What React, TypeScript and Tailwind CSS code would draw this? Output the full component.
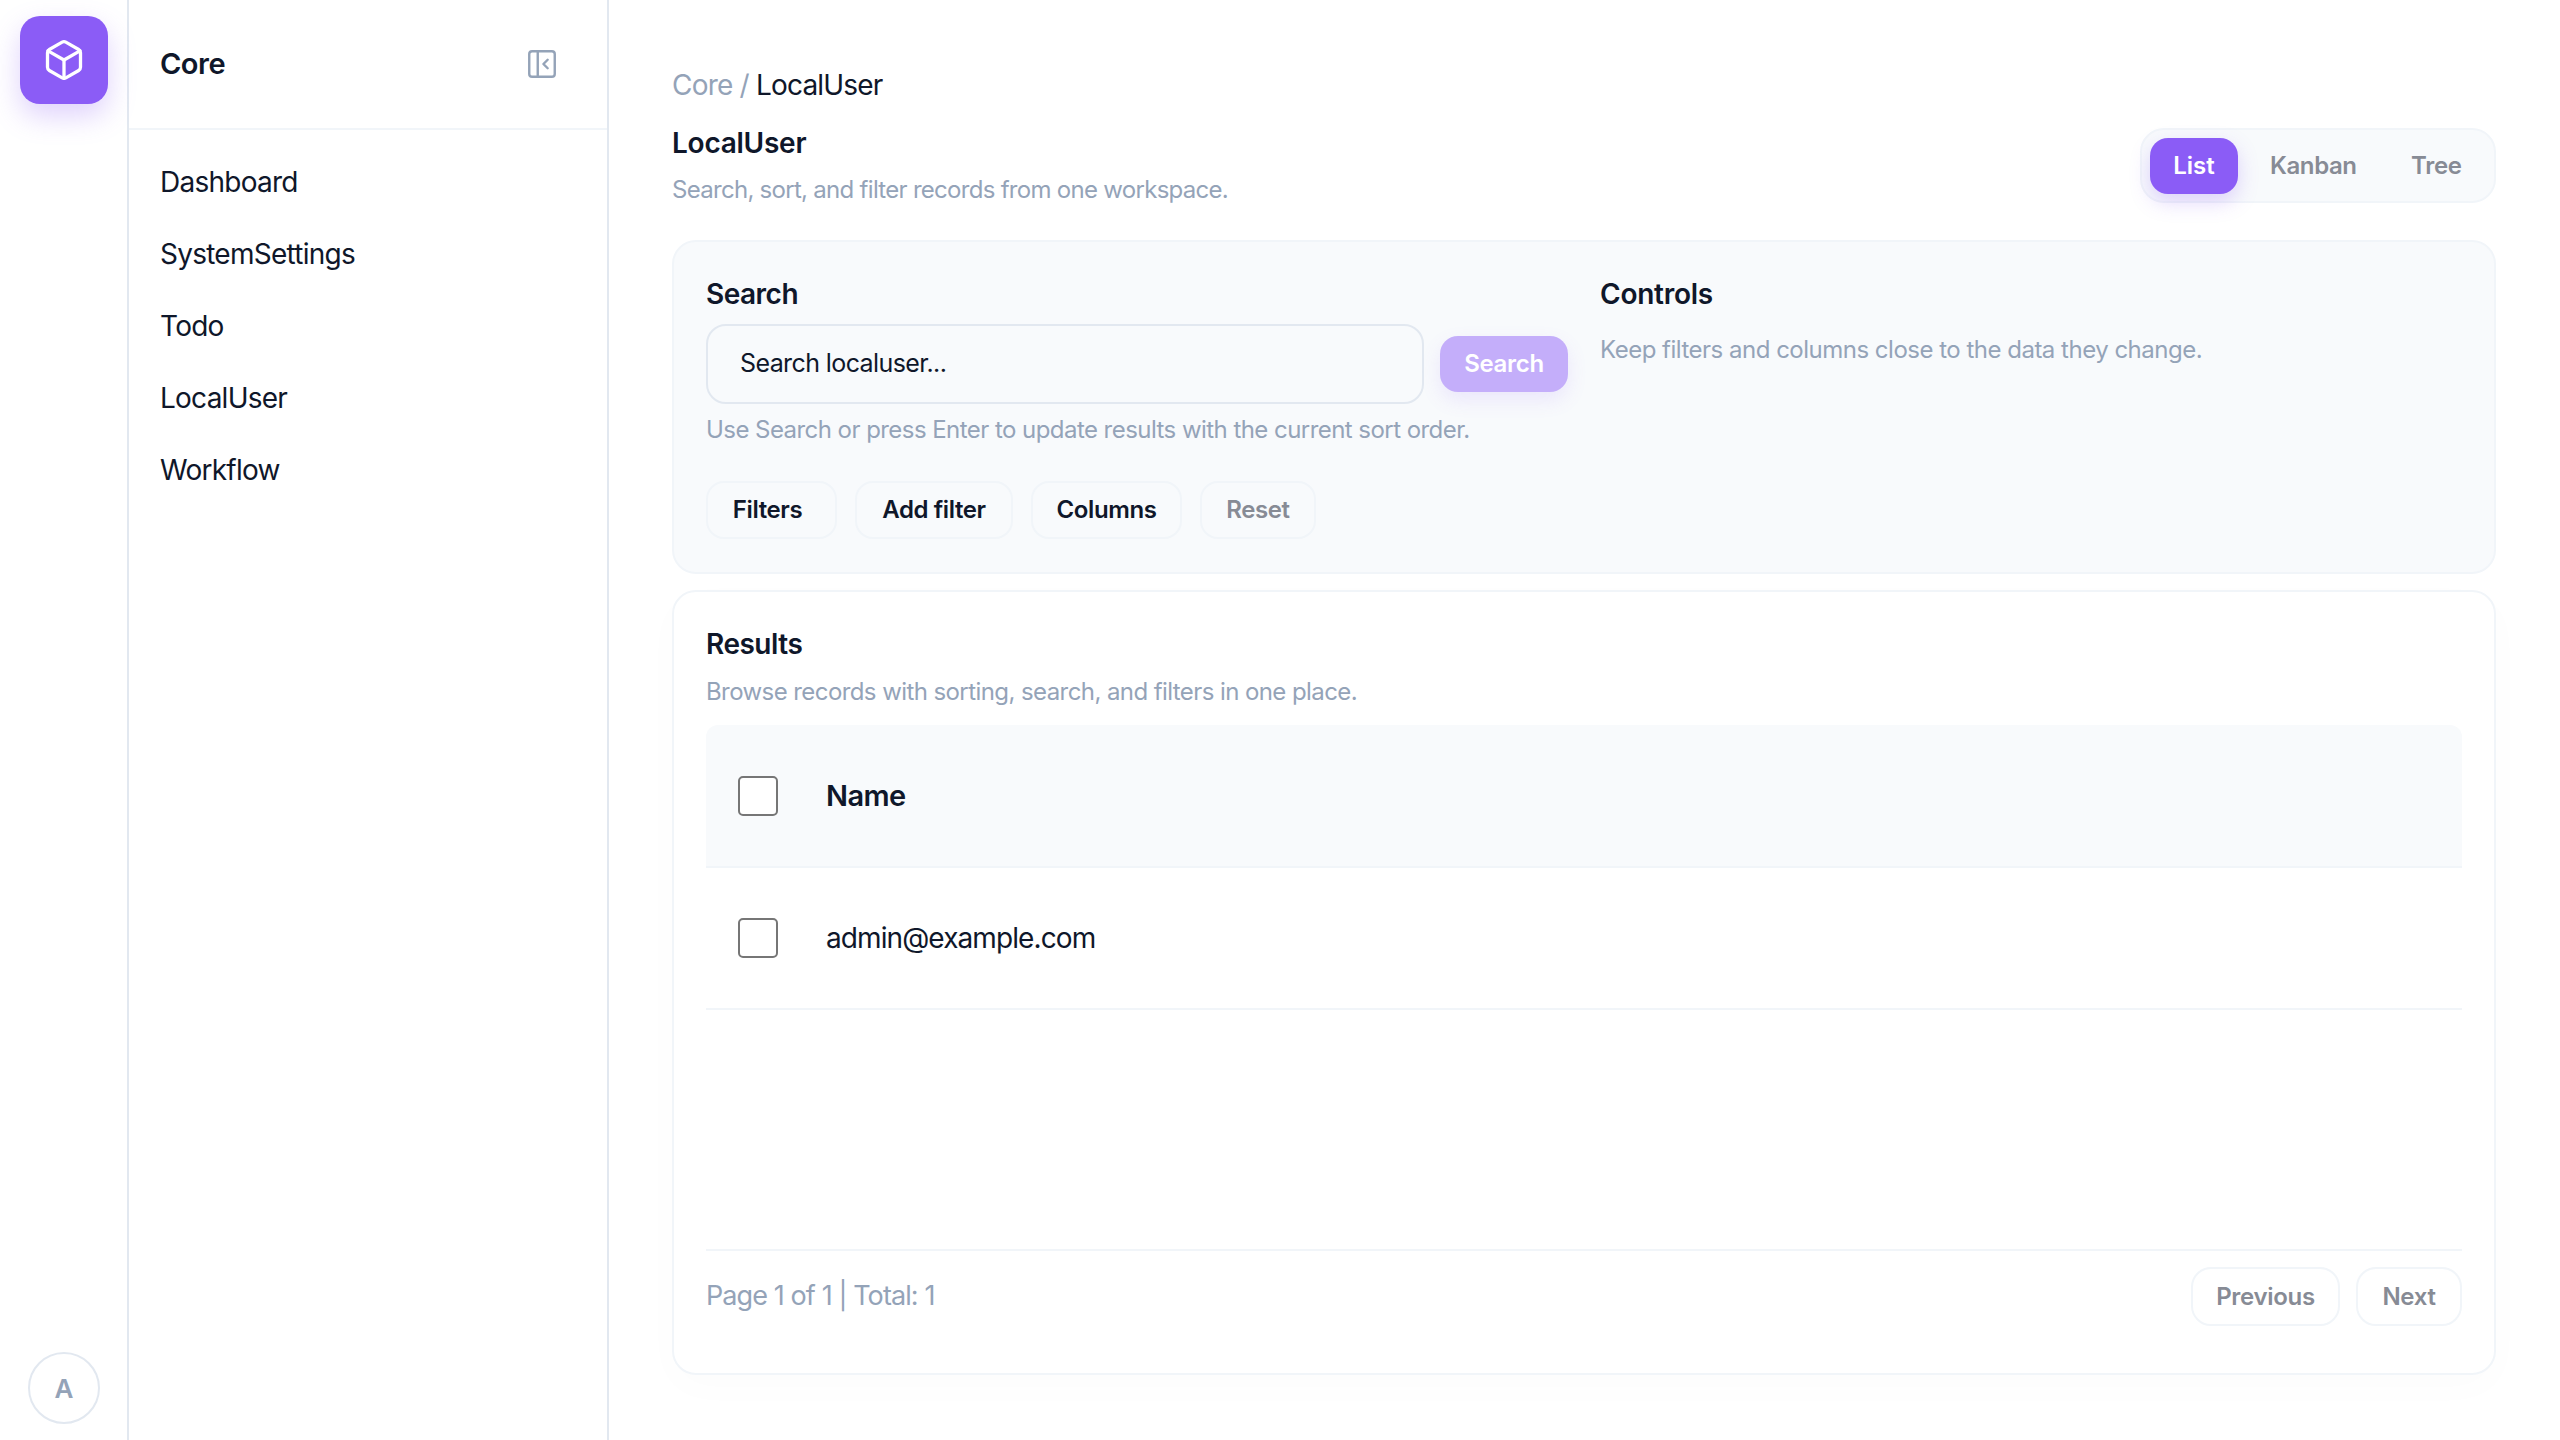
import { Box, PanelLeftClose } from "lucide-react";

const navItems = ["Dashboard", "SystemSettings", "Todo", "LocalUser", "Workflow"];

const filterButtons = [
  { label: "Filters", w: "w-[131px] pr-[8px]", muted: false },
  { label: "Add filter", w: "w-[158px]", muted: false },
  { label: "Columns", w: "w-[151px]", muted: false },
  { label: "Reset", w: "w-[116px]", muted: true },
];

function Check() {
  return <div className="w-[40px] h-[40px] shrink-0 rounded-[5px] border-[2px] border-[#767676] bg-white" />;
}

export default function App() {
  return (
    <div className="flex h-[1440px] w-[2560px] overflow-hidden bg-white text-[#0f172a] font-['Inter',sans-serif]">
      {/* Rail */}
      <aside className="flex w-[129px] shrink-0 flex-col items-center justify-between border-r-[2px] border-[#e2e8f0] pt-[16px] pb-[16px] pl-[1px]">
        <div className="flex h-[88px] w-[88px] items-center justify-center rounded-[20px] bg-[#8b5cf6] shadow-[0_12px_28px_rgba(139,92,246,0.28)]">
          <Box className="h-[44px] w-[44px] text-white" strokeWidth={1.8} />
        </div>
        <div className="flex h-[72px] w-[72px] items-center justify-center rounded-full border-[2px] border-[#e2e8f0] text-[26px] font-semibold text-[#94a3b8]">
          A
        </div>
      </aside>

      {/* Sidebar */}
      <aside className="w-[480px] shrink-0 border-r-[2px] border-[#e2e8f0]">
        <div className="flex h-[130px] items-center justify-between border-b-[2px] border-[#f1f5f9] pl-[31px] pr-[48px]">
          <span className="text-[29px] font-semibold tracking-[-0.5px]">Core</span>
          <PanelLeftClose className="h-[34px] w-[34px] text-[#94a3b8]" strokeWidth={1.7} />
        </div>
        <nav className="flex flex-col pt-[16px] pl-[31px]">
          {navItems.map((item) => (
            <a key={item} className="flex h-[72px] items-center text-[28px] tracking-[-0.75px]">
              {item}
            </a>
          ))}
        </nav>
      </aside>

      {/* Main */}
      <main className="flex min-w-0 flex-1 flex-col pl-[63px] pr-[64px] pt-[64px]">
        <div className="text-[28px] leading-[42px] tracking-[-0.8px] text-[#94a3b8]">
          Core / <span className="text-[#0f172a]">LocalUser</span>
        </div>

        <div className="mt-[22px] flex h-[75px] items-center justify-between">
          <div>
            <h1 className="text-[28px] font-semibold leading-[40px] tracking-[-0.25px]">LocalUser</h1>
            <p className="mt-[9px] text-[24px] leading-[36px] tracking-[-0.71px] text-[#94a3b8]">
              Search, sort, and filter records from one workspace.
            </p>
          </div>
          <div className="flex h-[75px] w-[356px] items-center rounded-[24px] border-[2px] border-[#f1f5f9] bg-[#f8fafc] pl-[8px] text-[24px] font-semibold">
            <div className="flex h-[56px] w-[88px] items-center justify-center rounded-[18px] bg-[#8b5cf6] text-white shadow-[0_8px_20px_rgba(139,92,246,0.25)]">
              List
            </div>
            <span className="ml-[32px] w-[84px] tracking-[-0.4px] text-[#878b95]">Kanban</span>
            <span className="ml-[57px] tracking-[-0.3px] text-[#878b95]">Tree</span>
          </div>
        </div>

        {/* Search card */}
        <section className="mt-[37px] flex h-[334px] gap-[32px] rounded-[24px] border-[2px] border-[#f1f5f9] bg-[#f8fafc] px-[32px] pt-[32px]">
          <div className="w-[862px] shrink-0">
            <h2 className="text-[28px] font-semibold leading-[40px] tracking-[-0.5px]">Search</h2>
            <div className="mt-[10px] flex items-center gap-[16px]">
              <div className="flex h-[80px] w-[718px] items-center rounded-[20px] border-[2px] border-[#e2e8f0] pl-[32px] text-[25px] tracking-[-0.6px]">
                Search localuser...
              </div>
              <button className="h-[56px] w-[128px] rounded-[18px] bg-[#c4aefa] text-[24px] font-semibold tracking-[-0.3px] text-white shadow-[0_8px_20px_rgba(139,92,246,0.12)]">
                Search
              </button>
            </div>
            <p className="mt-[8px] text-[24px] leading-[36px] tracking-[-0.55px] text-[#94a3b8]">
              Use Search or press Enter to update results with the current sort order.
            </p>
            <div className="mt-[33px] flex gap-[18px]">
              {filterButtons.map((b) => (
                <button
                  key={b.label}
                  className={`h-[58px] ${b.w} rounded-[18px] border-[2px] border-[#f1f5f9] text-[24px] font-semibold tracking-[-0.4px] ${
                    b.muted ? "text-[#878b95]" : "text-[#0f172a]"
                  }`}
                >
                  {b.label}
                </button>
              ))}
            </div>
          </div>
          <div>
            <h2 className="text-[28px] font-semibold leading-[40px] tracking-[-0.25px]">Controls</h2>
            <p className="mt-[18px] text-[24px] leading-[36px] tracking-[-0.5px] text-[#94a3b8]">
              Keep filters and columns close to the data they change.
            </p>
          </div>
        </section>

        {/* Results card */}
        <section className="mt-[16px] flex h-[785px] flex-col rounded-[24px] border-[2px] border-[#f1f5f9] bg-white px-[32px] pt-[32px] shadow-[0_12px_40px_rgba(15,23,42,0.015)]">
          <h2 className="text-[28px] font-semibold leading-[40px] tracking-[-0.5px]">Results</h2>
          <p className="mt-[10px] text-[24px] leading-[36px] tracking-[-0.58px] text-[#94a3b8]">
            Browse records with sorting, search, and filters in one place.
          </p>
          <div className="mt-[15px] flex h-[143px] items-center gap-[48px] rounded-t-[12px] border-b-[2px] border-[#f1f5f9] bg-[#f8fafc] pl-[32px]">
            <Check />
            <span className="text-[29px] font-semibold tracking-[-0.6px]">Name</span>
          </div>
          <div className="flex h-[142px] items-center gap-[48px] border-b-[2px] border-[#f1f5f9] pl-[32px]">
            <Check />
            <span className="text-[28px] tracking-[-0.9px]">admin@example.com</span>
          </div>
          <div className="mt-[239px] flex h-[76px] items-center justify-between border-t-[2px] border-[#f1f5f9] pt-[17px]">
            <span className="text-[27px] tracking-[-0.9px] text-[#94a3b8]">Page 1 of 1 | Total: 1</span>
            <div className="flex gap-[16px]">
              <button className="h-[59px] w-[149px] rounded-[20px] border-[2px] border-[#f1f5f9] text-[24px] font-semibold tracking-[-0.3px] text-[#878b95]">
                Previous
              </button>
              <button className="h-[59px] w-[106px] rounded-[20px] border-[2px] border-[#f1f5f9] text-[24px] font-semibold tracking-[-0.3px] text-[#878b95]">
                Next
              </button>
            </div>
          </div>
        </section>
      </main>
    </div>
  );
}
